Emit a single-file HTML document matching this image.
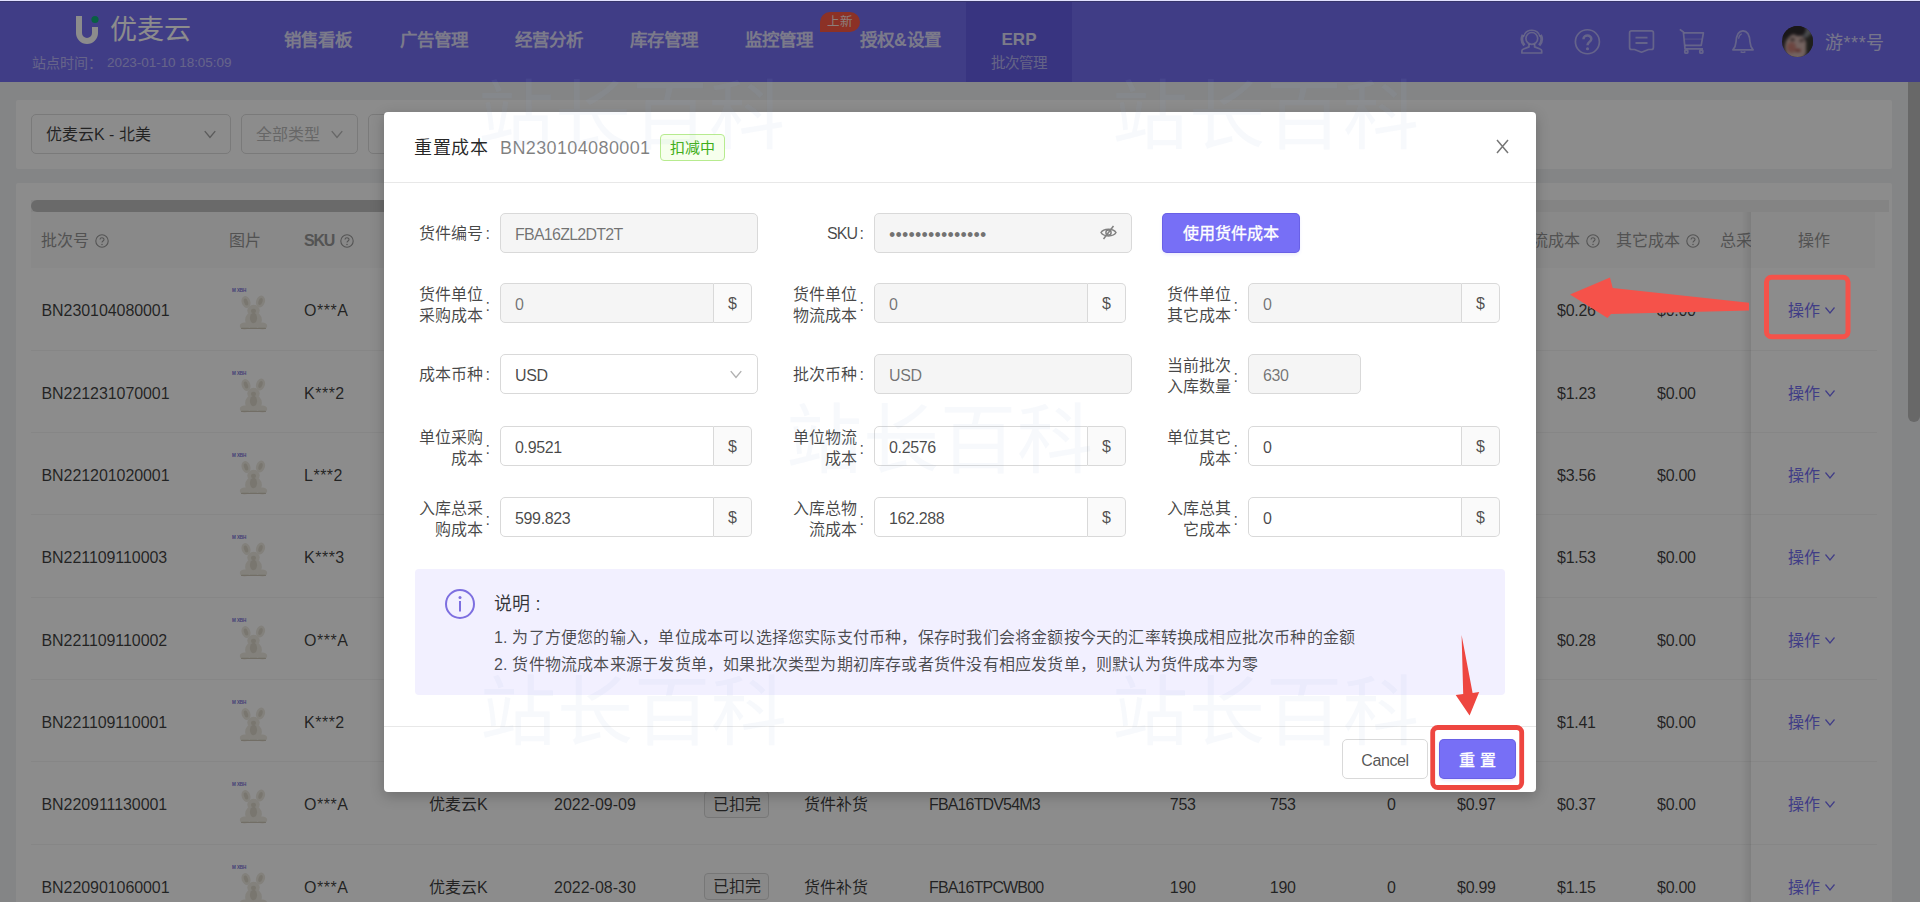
<!DOCTYPE html>
<html lang="zh-CN"><head><meta charset="utf-8"><title>批次管理</title>
<style>
*{box-sizing:border-box;margin:0;padding:0}
html,body{width:1920px;height:902px;overflow:hidden;background:#f0f2f5}
body{font-family:"Liberation Sans",sans-serif;font-size:16px;color:rgba(0,0,0,.76);position:relative}
.abs{position:absolute}
.t{position:absolute;white-space:nowrap;line-height:24px;height:24px}
#page{position:absolute;left:0;top:0;width:1920px;height:902px;overflow:hidden;background:#f0f2f5}
/* header */
#hdr{position:absolute;left:0;top:0;width:1920px;height:82px;background:#766ff5}
#hdr .top1{position:absolute;left:0;top:0;width:1920px;height:1px;background:#fff}
#hdr .top2{position:absolute;left:0;top:1px;width:1920px;height:1px;background:#625cc8}
.nav{position:absolute;top:28px;height:24px;line-height:24px;font-size:17.5px;font-weight:bold;color:rgba(255,255,255,.8);white-space:nowrap}
.erp{position:absolute;left:966px;top:1px;width:106px;height:81px;background:#675fe9}
.hicon{position:absolute;color:rgba(255,255,255,.45)}
/* cards */
.card{position:absolute;background:#fff;border-radius:2px}
.sel{position:absolute;top:14px;height:40px;border:1px solid #dedede;border-radius:5px;background:#fff}
.sel .t{top:8px}
/* table */
.th{position:absolute;top:17px;height:24px;line-height:24px;white-space:nowrap;color:#969696;font-size:16px}
.q{vertical-align:-1.5px;margin-left:6px;color:#9a9a9a}
.row{position:absolute;left:31px;width:1846px;height:82.35px;border-bottom:1px solid #f4f4f4}
.row .t{top:31px}
.thumb{position:absolute;left:201px;top:20px}
.tag{position:absolute;left:673px;top:28.5px;width:65px;height:27px;line-height:26px;border:1px solid #d9d9d9;border-radius:4px;background:#fafafa;text-align:center;font-size:16px;white-space:nowrap}
.r{text-align:right}
.op{color:#766ff5}
/* modal */
#mask{position:absolute;left:0;top:0;width:1920px;height:902px;background:rgba(0,0,0,.45)}
#modal{position:absolute;left:384px;top:112px;width:1152px;height:680px;background:#fff;border-radius:4px;box-shadow:0 4px 14px rgba(0,0,0,.22)}
#modal .hline{position:absolute;left:0;width:1152px;height:1px;background:#e8e8e8}
.lab{position:absolute;text-align:right;color:rgba(0,0,0,.72);font-size:16px;line-height:21px;white-space:nowrap}
.inp{position:absolute;height:40px;border:1px solid #d9d9d9;border-radius:5px;background:#fff;font-size:16px;line-height:42px;padding-left:14px;color:rgba(0,0,0,.72);white-space:nowrap;letter-spacing:-0.35px}
.inp.dis{background:#f5f5f5;color:rgba(0,0,0,.54)}
.inp.grp{border-radius:5px 0 0 5px}
.add{position:absolute;width:38px;height:40px;border:1px solid #d9d9d9;border-left:0;border-radius:0 5px 5px 0;background:#fafafa;text-align:center;line-height:40px;font-size:16px;color:rgba(0,0,0,.7)}
.btn{position:absolute;height:40px;border-radius:5px;background:#776ff6;box-shadow:inset 0 0 0 1px rgba(80,70,200,.35), 0 2px 3px rgba(118,111,245,.12);color:#fff;text-align:center;line-height:41px;font-size:16px;white-space:nowrap}
.wm{position:absolute;font-size:76px;line-height:80px;height:80px;white-space:nowrap;font-weight:normal;letter-spacing:1px;color:rgba(150,180,220,.075);pointer-events:none}
</style></head><body>
<div id="page">

<div id="hdr">
<svg class="abs" style="left:74px;top:14px" width="28" height="32" viewBox="0 0 28 32"><path d="M5 2 V19 a8 8 0 0 0 16 0 V13" fill="none" stroke="#fff" stroke-width="6" stroke-linecap="butt" opacity="1"/><circle cx="21" cy="5.5" r="3.6" fill="#0fb07a"/></svg>
<div class="t" style="left:110px;top:15px;height:30px;line-height:30px;font-size:27px;color:#fff;letter-spacing:0px">优麦云</div>
<div class="t" style="left:32px;top:53px;height:20px;line-height:20px;font-size:14px;color:rgba(255,255,255,.5)">站点时间：</div><div class="t" style="left:107px;top:53px;height:20px;line-height:20px;font-size:13.5px;color:rgba(255,255,255,.5);letter-spacing:-0.05px">2023-01-10 18:05:09</div>
<div class="nav" style="left:284px">销售看板</div>
<div class="nav" style="left:400px">广告管理</div>
<div class="nav" style="left:515px">经营分析</div>
<div class="nav" style="left:630px">库存管理</div>
<div class="nav" style="left:745px">监控管理</div>
<div class="nav" style="left:860px">授权&amp;设置</div>
<div class="abs" style="left:820px;top:12px;width:40px;height:20px;background:#ff5a45;border-radius:10px 10px 10px 0;color:rgba(255,255,255,.85);font-size:12.5px;line-height:20px;text-align:center;white-space:nowrap">上新</div>
<div class="erp"><div class="t" style="left:0;width:106px;text-align:center;top:27px;font-size:17px;font-weight:bold;color:rgba(255,255,255,.82)">ERP</div><div class="t" style="left:0;width:106px;text-align:center;top:50px;font-size:14.5px;color:rgba(255,255,255,.55)">批次管理</div></div>
<svg class="abs" style="left:0;top:0" width="1920" height="82" viewBox="0 0 1920 82" fill="none" stroke="rgba(222,222,255,.64)" stroke-width="1.7" stroke-linejoin="round"><circle cx="1531.8" cy="38.4" r="5.9"/><path d="M1523.6 36.6 A8.5 8.5 0 0 1 1540 36.6" stroke-width="1.5"/><path d="M1523 34.8 A9.6 9.6 0 0 0 1524.4 45.4 M1540.6 34.8 A9.6 9.6 0 0 1 1539.2 45.4" stroke-width="2.8"/><path d="M1529 44 V46.9 L1523.5 49 Q1522 49.5 1521.9 50.8 V53 H1541.7 V50.8 Q1541.6 49.5 1540.1 49 L1534.6 46.9 V44"/><circle cx="1587.4" cy="41.75" r="12"/><path d="M1583.5 39.2 C1583.5 34.3 1591.5 34.5 1591.3 39 C1591.2 42 1587.5 41.8 1587.5 45.2" stroke-width="2.5"/><circle cx="1587.5" cy="48.7" r="1.55" fill="rgba(222,222,255,.64)" stroke="none"/><path d="M1631.6 30.8 H1651.4 a2 2 0 0 1 2 2 V47.5 a2 2 0 0 1 -2 2 H1648.5 L1641.5 52.2 L1634.5 49.5 H1631.6 a2 2 0 0 1 -2 -2 V32.8 a2 2 0 0 1 2 -2 Z"/><path d="M1635.5 37.6 H1647.5 M1635.5 43 H1647.5" stroke-width="1.9"/><path d="M1679.8 29.4 L1683.4 32 L1685 48.8 H1703"/><path d="M1683.8 32.9 H1703.4 L1701.2 45.4 H1685"/><path d="M1684.6 39.1 H1702.2" stroke-width="1" opacity=".6"/><rect x="1684.8" y="50.3" width="3" height="2.8" rx=".6"/><rect x="1699.8" y="50.3" width="3" height="2.8" rx=".6"/><path d="M1743 30.9 C1737 30.9 1736.3 37 1736 42 C1735.7 46.5 1734.6 48 1732.9 49.8 H1753.1 C1751.4 48 1750.3 46.5 1750 42 C1749.7 37 1749 30.9 1743 30.9 Z"/><path d="M1740.6 51.6 Q1743 53.2 1745.4 51.6" stroke-width="1.4"/><path d="M1741.8 33.8 C1739.8 34.6 1738.8 36.6 1738.6 38.8" stroke-width="1.2"/></svg>
<div class="abs" style="left:1782px;top:26px;width:31px;height:31px;border-radius:50%;overflow:hidden;background:#3b3438"><div class="abs" style="left:-4px;top:-4px;width:39px;height:39px;filter:blur(1.6px)"><div class="abs" style="left:20px;top:0px;width:22px;height:16px;border-radius:50%;background:#85878c"></div><div class="abs" style="left:0px;top:-3px;width:28px;height:20px;border-radius:50%;background:#2f2a2e"></div><div class="abs" style="left:7px;top:12px;width:22px;height:27px;border-radius:50%;background:#d2b4ae"></div><div class="abs" style="left:9px;top:20px;width:9px;height:11px;border-radius:50%;background:#c0685e;opacity:.7"></div><div class="abs" style="left:12px;top:16px;width:5px;height:3px;border-radius:50%;background:#5a4644"></div><div class="abs" style="left:21px;top:17px;width:5px;height:3px;border-radius:50%;background:#6a5654"></div><div class="abs" style="left:17px;top:27px;width:6px;height:2.5px;border-radius:50%;background:#a8504a"></div><div class="abs" style="left:28px;top:12px;width:12px;height:28px;border-radius:45%;background:#3a3a34"></div><div class="abs" style="left:15px;top:6px;width:11px;height:8px;border-radius:50%;background:#2f2a2e"></div></div></div>
<div class="t" style="left:1825px;top:31px;font-size:18px;color:rgba(255,255,255,.72);letter-spacing:0.55px">游***号</div>
</div>
<div class="card" style="left:16px;top:100px;width:1876px;height:69px">
<div class="sel" style="left:15px;width:200px"><div class="t" style="left:14px;color:rgba(0,0,0,.75)">优麦云K - 北美</div><svg class="abs" style="left:171px;top:12px;color:#a6a6a6" width="14" height="14" viewBox="0 0 12 12"><path d="M1.5 3.5 L6 9 L10.5 3.5" fill="none" stroke="currentColor" stroke-width="1.2"/></svg></div>
<div class="sel" style="left:225px;width:117px"><div class="t" style="left:14px;color:#bcbcbc">全部类型</div><svg class="abs" style="left:88px;top:12px;color:#bcbcbc" width="14" height="14" viewBox="0 0 12 12"><path d="M1.5 3.5 L6 9 L10.5 3.5" fill="none" stroke="currentColor" stroke-width="1.2"/></svg></div>
<div class="sel" style="left:352px;width:200px"></div>
</div>
<div class="card" style="left:16px;top:183px;width:1876px;height:740px"></div>
<div class="abs" style="left:31px;top:200px;width:1858px;height:12px;background:#f1f1f1"></div>
<div class="abs" style="left:31px;top:200px;width:1380px;height:12px;background:#c1c1c1;border-radius:6px"></div>
<div class="abs" style="left:31px;top:212px;width:1846px;height:56px;background:#fafafa">
<div class="th" style="left:10px">批次号<svg class="q" width="14" height="14" viewBox="0 0 14 14"><circle cx="7" cy="7" r="6.2" fill="none" stroke="currentColor" stroke-width="1.1"/><path d="M5 5.6 C5 3.2 9 3.2 9 5.5 C9 7 7 7 7 8.6" fill="none" stroke="currentColor" stroke-width="1.1"/><circle cx="7" cy="10.5" r="0.75" fill="currentColor"/></svg></div>
<div class="th" style="left:198px">图片</div>
<div class="th" style="left:273px;font-weight:bold;font-size:16px;color:#999;letter-spacing:-1.2px">SKU<svg class="q" width="14" height="14" viewBox="0 0 14 14"><circle cx="7" cy="7" r="6.2" fill="none" stroke="currentColor" stroke-width="1.1"/><path d="M5 5.6 C5 3.2 9 3.2 9 5.5 C9 7 7 7 7 8.6" fill="none" stroke="currentColor" stroke-width="1.1"/><circle cx="7" cy="10.5" r="0.75" fill="currentColor"/></svg></div>
<div class="th r" style="right:277px">物流成本<svg class="q" width="14" height="14" viewBox="0 0 14 14"><circle cx="7" cy="7" r="6.2" fill="none" stroke="currentColor" stroke-width="1.1"/><path d="M5 5.6 C5 3.2 9 3.2 9 5.5 C9 7 7 7 7 8.6" fill="none" stroke="currentColor" stroke-width="1.1"/><circle cx="7" cy="10.5" r="0.75" fill="currentColor"/></svg></div>
<div class="th r" style="right:177px">其它成本<svg class="q" width="14" height="14" viewBox="0 0 14 14"><circle cx="7" cy="7" r="6.2" fill="none" stroke="currentColor" stroke-width="1.1"/><path d="M5 5.6 C5 3.2 9 3.2 9 5.5 C9 7 7 7 7 8.6" fill="none" stroke="currentColor" stroke-width="1.1"/><circle cx="7" cy="10.5" r="0.75" fill="currentColor"/></svg></div>
<div class="th" style="left:1689px">总采购成本</div>
</div>
<div class="row" style="top:268.3px">
<div class="t" style="left:10.5px;letter-spacing:-0.07px">BN230104080001</div>
<svg class="thumb" width="40" height="46" viewBox="0 0 40 46"><text x="0" y="4.2" font-size="4.6" fill="#7b73d8" font-family="Liberation Sans, sans-serif" font-weight="bold" letter-spacing="-0.1">M XBH</text><g fill="#eeebe2"><ellipse cx="14" cy="14" rx="4.4" ry="6" transform="rotate(-18 14 14)"/><ellipse cx="28.5" cy="13.5" rx="4.4" ry="6" transform="rotate(18 28.5 13.5)"/><ellipse cx="21.5" cy="22.5" rx="6.2" ry="5.8"/><ellipse cx="21.5" cy="32" rx="8.4" ry="8.6"/><ellipse cx="12.6" cy="38" rx="4.8" ry="3.4"/><ellipse cx="30.4" cy="38" rx="4.8" ry="3.4"/></g><g fill="#ddd8cb"><ellipse cx="14" cy="14" rx="2" ry="3.6" transform="rotate(-18 14 14)"/><ellipse cx="28.5" cy="13.5" rx="2" ry="3.6" transform="rotate(18 28.5 13.5)"/><ellipse cx="21.5" cy="30" rx="3.6" ry="5.2"/><ellipse cx="21.5" cy="23" rx="2.6" ry="2.2"/><rect x="9" y="39.8" width="25" height="1.3" rx=".6" fill="#cfc9ba"/></g></svg>
<div class="t" style="left:273px;letter-spacing:0.5px">O***A</div>
<div class="t" style="left:398px">优麦云K</div>
<div class="t" style="left:523px">2023-01-04</div>
<div class="tag">扣减中</div>
<div class="t" style="left:773px">货件补货</div>
<div class="t" style="left:898px;letter-spacing:-0.85px">FBA16ZL2DT2T</div>
<div class="t r" style="right:681.4px;letter-spacing:-0.3px">630</div>
<div class="t r" style="right:581.4px;letter-spacing:-0.3px">630</div>
<div class="t r" style="right:481.4px;letter-spacing:-0.3px">0</div>
<div class="t r" style="right:381.4px;letter-spacing:-0.3px">$0.95</div>
<div class="t r" style="right:281.4px;letter-spacing:-0.3px">$0.26</div>
<div class="t r" style="right:181.4px;letter-spacing:-0.3px">$0.00</div>
</div>
<div class="row" style="top:350.6px">
<div class="t" style="left:10.5px;letter-spacing:-0.07px">BN221231070001</div>
<svg class="thumb" width="40" height="46" viewBox="0 0 40 46"><text x="0" y="4.2" font-size="4.6" fill="#7b73d8" font-family="Liberation Sans, sans-serif" font-weight="bold" letter-spacing="-0.1">M XBH</text><g fill="#eeebe2"><ellipse cx="14" cy="14" rx="4.4" ry="6" transform="rotate(-18 14 14)"/><ellipse cx="28.5" cy="13.5" rx="4.4" ry="6" transform="rotate(18 28.5 13.5)"/><ellipse cx="21.5" cy="22.5" rx="6.2" ry="5.8"/><ellipse cx="21.5" cy="32" rx="8.4" ry="8.6"/><ellipse cx="12.6" cy="38" rx="4.8" ry="3.4"/><ellipse cx="30.4" cy="38" rx="4.8" ry="3.4"/></g><g fill="#ddd8cb"><ellipse cx="14" cy="14" rx="2" ry="3.6" transform="rotate(-18 14 14)"/><ellipse cx="28.5" cy="13.5" rx="2" ry="3.6" transform="rotate(18 28.5 13.5)"/><ellipse cx="21.5" cy="30" rx="3.6" ry="5.2"/><ellipse cx="21.5" cy="23" rx="2.6" ry="2.2"/><rect x="9" y="39.8" width="25" height="1.3" rx=".6" fill="#cfc9ba"/></g></svg>
<div class="t" style="left:273px;letter-spacing:0.5px">K***2</div>
<div class="t" style="left:398px">优麦云K</div>
<div class="t" style="left:523px">2022-12-31</div>
<div class="tag">扣减中</div>
<div class="t" style="left:773px">货件补货</div>
<div class="t" style="left:898px;letter-spacing:-0.85px">FBA16YK7QD2L</div>
<div class="t r" style="right:681.4px;letter-spacing:-0.3px">420</div>
<div class="t r" style="right:581.4px;letter-spacing:-0.3px">420</div>
<div class="t r" style="right:481.4px;letter-spacing:-0.3px">0</div>
<div class="t r" style="right:381.4px;letter-spacing:-0.3px">$1.12</div>
<div class="t r" style="right:281.4px;letter-spacing:-0.3px">$1.23</div>
<div class="t r" style="right:181.4px;letter-spacing:-0.3px">$0.00</div>
</div>
<div class="row" style="top:433.0px">
<div class="t" style="left:10.5px;letter-spacing:-0.07px">BN221201020001</div>
<svg class="thumb" width="40" height="46" viewBox="0 0 40 46"><text x="0" y="4.2" font-size="4.6" fill="#7b73d8" font-family="Liberation Sans, sans-serif" font-weight="bold" letter-spacing="-0.1">M XBH</text><g fill="#eeebe2"><ellipse cx="14" cy="14" rx="4.4" ry="6" transform="rotate(-18 14 14)"/><ellipse cx="28.5" cy="13.5" rx="4.4" ry="6" transform="rotate(18 28.5 13.5)"/><ellipse cx="21.5" cy="22.5" rx="6.2" ry="5.8"/><ellipse cx="21.5" cy="32" rx="8.4" ry="8.6"/><ellipse cx="12.6" cy="38" rx="4.8" ry="3.4"/><ellipse cx="30.4" cy="38" rx="4.8" ry="3.4"/></g><g fill="#ddd8cb"><ellipse cx="14" cy="14" rx="2" ry="3.6" transform="rotate(-18 14 14)"/><ellipse cx="28.5" cy="13.5" rx="2" ry="3.6" transform="rotate(18 28.5 13.5)"/><ellipse cx="21.5" cy="30" rx="3.6" ry="5.2"/><ellipse cx="21.5" cy="23" rx="2.6" ry="2.2"/><rect x="9" y="39.8" width="25" height="1.3" rx=".6" fill="#cfc9ba"/></g></svg>
<div class="t" style="left:273px;letter-spacing:0.5px">L***2</div>
<div class="t" style="left:398px">优麦云K</div>
<div class="t" style="left:523px">2022-12-01</div>
<div class="tag">已扣完</div>
<div class="t" style="left:773px">货件补货</div>
<div class="t" style="left:898px;letter-spacing:-0.85px">FBA16XW3PL9M</div>
<div class="t r" style="right:681.4px;letter-spacing:-0.3px">300</div>
<div class="t r" style="right:581.4px;letter-spacing:-0.3px">300</div>
<div class="t r" style="right:481.4px;letter-spacing:-0.3px">0</div>
<div class="t r" style="right:381.4px;letter-spacing:-0.3px">$2.10</div>
<div class="t r" style="right:281.4px;letter-spacing:-0.3px">$3.56</div>
<div class="t r" style="right:181.4px;letter-spacing:-0.3px">$0.00</div>
</div>
<div class="row" style="top:515.4px">
<div class="t" style="left:10.5px;letter-spacing:-0.07px">BN221109110003</div>
<svg class="thumb" width="40" height="46" viewBox="0 0 40 46"><text x="0" y="4.2" font-size="4.6" fill="#7b73d8" font-family="Liberation Sans, sans-serif" font-weight="bold" letter-spacing="-0.1">M XBH</text><g fill="#eeebe2"><ellipse cx="14" cy="14" rx="4.4" ry="6" transform="rotate(-18 14 14)"/><ellipse cx="28.5" cy="13.5" rx="4.4" ry="6" transform="rotate(18 28.5 13.5)"/><ellipse cx="21.5" cy="22.5" rx="6.2" ry="5.8"/><ellipse cx="21.5" cy="32" rx="8.4" ry="8.6"/><ellipse cx="12.6" cy="38" rx="4.8" ry="3.4"/><ellipse cx="30.4" cy="38" rx="4.8" ry="3.4"/></g><g fill="#ddd8cb"><ellipse cx="14" cy="14" rx="2" ry="3.6" transform="rotate(-18 14 14)"/><ellipse cx="28.5" cy="13.5" rx="2" ry="3.6" transform="rotate(18 28.5 13.5)"/><ellipse cx="21.5" cy="30" rx="3.6" ry="5.2"/><ellipse cx="21.5" cy="23" rx="2.6" ry="2.2"/><rect x="9" y="39.8" width="25" height="1.3" rx=".6" fill="#cfc9ba"/></g></svg>
<div class="t" style="left:273px;letter-spacing:0.5px">K***3</div>
<div class="t" style="left:398px">优麦云K</div>
<div class="t" style="left:523px">2022-11-09</div>
<div class="tag">已扣完</div>
<div class="t" style="left:773px">货件补货</div>
<div class="t" style="left:898px;letter-spacing:-0.85px">FBA16WT5RM1C</div>
<div class="t r" style="right:681.4px;letter-spacing:-0.3px">510</div>
<div class="t r" style="right:581.4px;letter-spacing:-0.3px">510</div>
<div class="t r" style="right:481.4px;letter-spacing:-0.3px">0</div>
<div class="t r" style="right:381.4px;letter-spacing:-0.3px">$1.04</div>
<div class="t r" style="right:281.4px;letter-spacing:-0.3px">$1.53</div>
<div class="t r" style="right:181.4px;letter-spacing:-0.3px">$0.00</div>
</div>
<div class="row" style="top:597.7px">
<div class="t" style="left:10.5px;letter-spacing:-0.07px">BN221109110002</div>
<svg class="thumb" width="40" height="46" viewBox="0 0 40 46"><text x="0" y="4.2" font-size="4.6" fill="#7b73d8" font-family="Liberation Sans, sans-serif" font-weight="bold" letter-spacing="-0.1">M XBH</text><g fill="#eeebe2"><ellipse cx="14" cy="14" rx="4.4" ry="6" transform="rotate(-18 14 14)"/><ellipse cx="28.5" cy="13.5" rx="4.4" ry="6" transform="rotate(18 28.5 13.5)"/><ellipse cx="21.5" cy="22.5" rx="6.2" ry="5.8"/><ellipse cx="21.5" cy="32" rx="8.4" ry="8.6"/><ellipse cx="12.6" cy="38" rx="4.8" ry="3.4"/><ellipse cx="30.4" cy="38" rx="4.8" ry="3.4"/></g><g fill="#ddd8cb"><ellipse cx="14" cy="14" rx="2" ry="3.6" transform="rotate(-18 14 14)"/><ellipse cx="28.5" cy="13.5" rx="2" ry="3.6" transform="rotate(18 28.5 13.5)"/><ellipse cx="21.5" cy="30" rx="3.6" ry="5.2"/><ellipse cx="21.5" cy="23" rx="2.6" ry="2.2"/><rect x="9" y="39.8" width="25" height="1.3" rx=".6" fill="#cfc9ba"/></g></svg>
<div class="t" style="left:273px;letter-spacing:0.5px">O***A</div>
<div class="t" style="left:398px">优麦云K</div>
<div class="t" style="left:523px">2022-11-09</div>
<div class="tag">已扣完</div>
<div class="t" style="left:773px">货件补货</div>
<div class="t" style="left:898px;letter-spacing:-0.85px">FBA16WT5RM1C</div>
<div class="t r" style="right:681.4px;letter-spacing:-0.3px">260</div>
<div class="t r" style="right:581.4px;letter-spacing:-0.3px">260</div>
<div class="t r" style="right:481.4px;letter-spacing:-0.3px">0</div>
<div class="t r" style="right:381.4px;letter-spacing:-0.3px">$0.93</div>
<div class="t r" style="right:281.4px;letter-spacing:-0.3px">$0.28</div>
<div class="t r" style="right:181.4px;letter-spacing:-0.3px">$0.00</div>
</div>
<div class="row" style="top:680.0px">
<div class="t" style="left:10.5px;letter-spacing:-0.07px">BN221109110001</div>
<svg class="thumb" width="40" height="46" viewBox="0 0 40 46"><text x="0" y="4.2" font-size="4.6" fill="#7b73d8" font-family="Liberation Sans, sans-serif" font-weight="bold" letter-spacing="-0.1">M XBH</text><g fill="#eeebe2"><ellipse cx="14" cy="14" rx="4.4" ry="6" transform="rotate(-18 14 14)"/><ellipse cx="28.5" cy="13.5" rx="4.4" ry="6" transform="rotate(18 28.5 13.5)"/><ellipse cx="21.5" cy="22.5" rx="6.2" ry="5.8"/><ellipse cx="21.5" cy="32" rx="8.4" ry="8.6"/><ellipse cx="12.6" cy="38" rx="4.8" ry="3.4"/><ellipse cx="30.4" cy="38" rx="4.8" ry="3.4"/></g><g fill="#ddd8cb"><ellipse cx="14" cy="14" rx="2" ry="3.6" transform="rotate(-18 14 14)"/><ellipse cx="28.5" cy="13.5" rx="2" ry="3.6" transform="rotate(18 28.5 13.5)"/><ellipse cx="21.5" cy="30" rx="3.6" ry="5.2"/><ellipse cx="21.5" cy="23" rx="2.6" ry="2.2"/><rect x="9" y="39.8" width="25" height="1.3" rx=".6" fill="#cfc9ba"/></g></svg>
<div class="t" style="left:273px;letter-spacing:0.5px">K***2</div>
<div class="t" style="left:398px">优麦云K</div>
<div class="t" style="left:523px">2022-11-09</div>
<div class="tag">已扣完</div>
<div class="t" style="left:773px">货件补货</div>
<div class="t" style="left:898px;letter-spacing:-0.85px">FBA16WT5RM1C</div>
<div class="t r" style="right:681.4px;letter-spacing:-0.3px">480</div>
<div class="t r" style="right:581.4px;letter-spacing:-0.3px">480</div>
<div class="t r" style="right:481.4px;letter-spacing:-0.3px">0</div>
<div class="t r" style="right:381.4px;letter-spacing:-0.3px">$1.02</div>
<div class="t r" style="right:281.4px;letter-spacing:-0.3px">$1.41</div>
<div class="t r" style="right:181.4px;letter-spacing:-0.3px">$0.00</div>
</div>
<div class="row" style="top:762.4px">
<div class="t" style="left:10.5px;letter-spacing:-0.07px">BN220911130001</div>
<svg class="thumb" width="40" height="46" viewBox="0 0 40 46"><text x="0" y="4.2" font-size="4.6" fill="#7b73d8" font-family="Liberation Sans, sans-serif" font-weight="bold" letter-spacing="-0.1">M XBH</text><g fill="#eeebe2"><ellipse cx="14" cy="14" rx="4.4" ry="6" transform="rotate(-18 14 14)"/><ellipse cx="28.5" cy="13.5" rx="4.4" ry="6" transform="rotate(18 28.5 13.5)"/><ellipse cx="21.5" cy="22.5" rx="6.2" ry="5.8"/><ellipse cx="21.5" cy="32" rx="8.4" ry="8.6"/><ellipse cx="12.6" cy="38" rx="4.8" ry="3.4"/><ellipse cx="30.4" cy="38" rx="4.8" ry="3.4"/></g><g fill="#ddd8cb"><ellipse cx="14" cy="14" rx="2" ry="3.6" transform="rotate(-18 14 14)"/><ellipse cx="28.5" cy="13.5" rx="2" ry="3.6" transform="rotate(18 28.5 13.5)"/><ellipse cx="21.5" cy="30" rx="3.6" ry="5.2"/><ellipse cx="21.5" cy="23" rx="2.6" ry="2.2"/><rect x="9" y="39.8" width="25" height="1.3" rx=".6" fill="#cfc9ba"/></g></svg>
<div class="t" style="left:273px;letter-spacing:0.5px">O***A</div>
<div class="t" style="left:398px">优麦云K</div>
<div class="t" style="left:523px">2022-09-09</div>
<div class="tag">已扣完</div>
<div class="t" style="left:773px">货件补货</div>
<div class="t" style="left:898px;letter-spacing:-0.85px">FBA16TDV54M3</div>
<div class="t r" style="right:681.4px;letter-spacing:-0.3px">753</div>
<div class="t r" style="right:581.4px;letter-spacing:-0.3px">753</div>
<div class="t r" style="right:481.4px;letter-spacing:-0.3px">0</div>
<div class="t r" style="right:381.4px;letter-spacing:-0.3px">$0.97</div>
<div class="t r" style="right:281.4px;letter-spacing:-0.3px">$0.37</div>
<div class="t r" style="right:181.4px;letter-spacing:-0.3px">$0.00</div>
</div>
<div class="row" style="top:844.8px">
<div class="t" style="left:10.5px;letter-spacing:-0.07px">BN220901060001</div>
<svg class="thumb" width="40" height="46" viewBox="0 0 40 46"><text x="0" y="4.2" font-size="4.6" fill="#7b73d8" font-family="Liberation Sans, sans-serif" font-weight="bold" letter-spacing="-0.1">M XBH</text><g fill="#eeebe2"><ellipse cx="14" cy="14" rx="4.4" ry="6" transform="rotate(-18 14 14)"/><ellipse cx="28.5" cy="13.5" rx="4.4" ry="6" transform="rotate(18 28.5 13.5)"/><ellipse cx="21.5" cy="22.5" rx="6.2" ry="5.8"/><ellipse cx="21.5" cy="32" rx="8.4" ry="8.6"/><ellipse cx="12.6" cy="38" rx="4.8" ry="3.4"/><ellipse cx="30.4" cy="38" rx="4.8" ry="3.4"/></g><g fill="#ddd8cb"><ellipse cx="14" cy="14" rx="2" ry="3.6" transform="rotate(-18 14 14)"/><ellipse cx="28.5" cy="13.5" rx="2" ry="3.6" transform="rotate(18 28.5 13.5)"/><ellipse cx="21.5" cy="30" rx="3.6" ry="5.2"/><ellipse cx="21.5" cy="23" rx="2.6" ry="2.2"/><rect x="9" y="39.8" width="25" height="1.3" rx=".6" fill="#cfc9ba"/></g></svg>
<div class="t" style="left:273px;letter-spacing:0.5px">O***A</div>
<div class="t" style="left:398px">优麦云K</div>
<div class="t" style="left:523px">2022-08-30</div>
<div class="tag">已扣完</div>
<div class="t" style="left:773px">货件补货</div>
<div class="t" style="left:898px;letter-spacing:-0.85px">FBA16TPCWB00</div>
<div class="t r" style="right:681.4px;letter-spacing:-0.3px">190</div>
<div class="t r" style="right:581.4px;letter-spacing:-0.3px">190</div>
<div class="t r" style="right:481.4px;letter-spacing:-0.3px">0</div>
<div class="t r" style="right:381.4px;letter-spacing:-0.3px">$0.99</div>
<div class="t r" style="right:281.4px;letter-spacing:-0.3px">$1.15</div>
<div class="t r" style="right:181.4px;letter-spacing:-0.3px">$0.00</div>
</div>
<div class="abs" style="left:1741px;top:212px;width:10px;height:700px;background:linear-gradient(to right,rgba(0,0,0,0),rgba(0,0,0,.09))"></div>
<div class="abs" style="left:1751px;top:212px;width:126px;height:700px;background:#fff"></div>
<div class="abs" style="left:1751px;top:212px;width:124px;height:56px;background:#fafafa"><div class="th" style="left:0;width:126px;text-align:center">操作</div></div>
<div class="abs" style="left:1876px;top:233px;width:1px;height:15px;background:#fff;opacity:.55"></div>
<div class="abs" style="left:1751px;top:268.3px;width:126px;height:82.35px;border-bottom:1px solid #f4f4f4"><div class="t op" style="left:37px;top:31px">操作<svg class="" style="margin-left:4px;vertical-align:0px" width="12" height="12" viewBox="0 0 12 12"><path d="M1.5 3.5 L6 9 L10.5 3.5" fill="none" stroke="currentColor" stroke-width="1.2"/></svg></div></div>
<div class="abs" style="left:1751px;top:350.6px;width:126px;height:82.35px;border-bottom:1px solid #f4f4f4"><div class="t op" style="left:37px;top:31px">操作<svg class="" style="margin-left:4px;vertical-align:0px" width="12" height="12" viewBox="0 0 12 12"><path d="M1.5 3.5 L6 9 L10.5 3.5" fill="none" stroke="currentColor" stroke-width="1.2"/></svg></div></div>
<div class="abs" style="left:1751px;top:433.0px;width:126px;height:82.35px;border-bottom:1px solid #f4f4f4"><div class="t op" style="left:37px;top:31px">操作<svg class="" style="margin-left:4px;vertical-align:0px" width="12" height="12" viewBox="0 0 12 12"><path d="M1.5 3.5 L6 9 L10.5 3.5" fill="none" stroke="currentColor" stroke-width="1.2"/></svg></div></div>
<div class="abs" style="left:1751px;top:515.4px;width:126px;height:82.35px;border-bottom:1px solid #f4f4f4"><div class="t op" style="left:37px;top:31px">操作<svg class="" style="margin-left:4px;vertical-align:0px" width="12" height="12" viewBox="0 0 12 12"><path d="M1.5 3.5 L6 9 L10.5 3.5" fill="none" stroke="currentColor" stroke-width="1.2"/></svg></div></div>
<div class="abs" style="left:1751px;top:597.7px;width:126px;height:82.35px;border-bottom:1px solid #f4f4f4"><div class="t op" style="left:37px;top:31px">操作<svg class="" style="margin-left:4px;vertical-align:0px" width="12" height="12" viewBox="0 0 12 12"><path d="M1.5 3.5 L6 9 L10.5 3.5" fill="none" stroke="currentColor" stroke-width="1.2"/></svg></div></div>
<div class="abs" style="left:1751px;top:680.0px;width:126px;height:82.35px;border-bottom:1px solid #f4f4f4"><div class="t op" style="left:37px;top:31px">操作<svg class="" style="margin-left:4px;vertical-align:0px" width="12" height="12" viewBox="0 0 12 12"><path d="M1.5 3.5 L6 9 L10.5 3.5" fill="none" stroke="currentColor" stroke-width="1.2"/></svg></div></div>
<div class="abs" style="left:1751px;top:762.4px;width:126px;height:82.35px;border-bottom:1px solid #f4f4f4"><div class="t op" style="left:37px;top:31px">操作<svg class="" style="margin-left:4px;vertical-align:0px" width="12" height="12" viewBox="0 0 12 12"><path d="M1.5 3.5 L6 9 L10.5 3.5" fill="none" stroke="currentColor" stroke-width="1.2"/></svg></div></div>
<div class="abs" style="left:1751px;top:844.8px;width:126px;height:82.35px;border-bottom:1px solid #f4f4f4"><div class="t op" style="left:37px;top:31px">操作<svg class="" style="margin-left:4px;vertical-align:0px" width="12" height="12" viewBox="0 0 12 12"><path d="M1.5 3.5 L6 9 L10.5 3.5" fill="none" stroke="currentColor" stroke-width="1.2"/></svg></div></div>
<div class="abs" style="left:1908px;top:82px;width:12px;height:340px;background:#bdbdbd;border-radius:0 0 6px 6px"></div>
<div id="mask"></div>
<div class="abs" style="left:0;top:0;width:1920px;height:1px;background:#e1e1ff"></div><div class="abs" style="left:0;top:1px;width:1920px;height:1px;background:#37356a"></div>
<div id="modal">
<div class="t" style="left:30px;top:24px;font-size:18px;color:rgba(0,0,0,.85);letter-spacing:0.6px">重置成本</div>
<div class="t" style="left:116px;top:24px;font-size:18px;color:rgba(0,0,0,.5);letter-spacing:0.38px">BN230104080001</div>
<div class="abs" style="left:276px;top:22px;width:65px;height:27px;border:1px solid #b7eb8f;background:#f6ffed;border-radius:4px;color:#3fae1a;font-size:15px;line-height:25px;text-align:center;white-space:nowrap">扣减中</div>
<svg class="abs" style="left:1112px;top:27px" width="13" height="15" viewBox="0 0 13 15"><path d="M1 1 L12 14 M12 1 L1 14" stroke="#777" stroke-width="1.5" fill="none"/></svg>
<div class="hline" style="top:70px"></div>
<div class="lab" style="right:1046px;top:110.5px;padding-right:7px">货件编号<span style="position:absolute;right:0;top:0.0px">:</span></div>
<div class="inp dis" style="left:116px;top:101px;width:258px"><span style="letter-spacing:-0.75px">FBA16ZL2DT2T</span></div>
<div class="lab" style="right:672px;top:110.5px;padding-right:7px"><span style="letter-spacing:-1px">SKU</span><span style="position:absolute;right:0;top:0.0px">:</span></div>
<div class="inp dis" style="left:490px;top:101px;width:258px"><span style="letter-spacing:0.2px;font-size:18px;position:relative;top:0px">•••••••••••••••</span></div>
<svg class="abs" style="left:716px;top:113px" width="17" height="15" viewBox="0 0 17 15" fill="none" stroke="#808080" stroke-width="1.5"><path d="M1 7.5 C3.5 3 13.5 3 16 7.5 C13.5 12 3.5 12 1 7.5 Z"/><circle cx="8.5" cy="7.5" r="2.6"/><path d="M13.5 1 L3.5 14"/></svg>
<div class="btn" style="left:778px;top:101px;width:138px;font-weight:normal;font-size:16px;-webkit-text-stroke:0.35px #fff">使用货件成本</div>
<div class="lab" style="right:1046px;top:172.0px;padding-right:7px">货件单位<br>采购成本<span style="position:absolute;right:0;top:10.5px">:</span></div>
<div class="inp dis grp" style="left:116px;top:171px;width:214px">0</div>
<div class="add" style="left:330px;top:171px">$</div>
<div class="lab" style="right:672px;top:172.0px;padding-right:7px">货件单位<br>物流成本<span style="position:absolute;right:0;top:10.5px">:</span></div>
<div class="inp dis grp" style="left:490px;top:171px;width:214px">0</div>
<div class="add" style="left:704px;top:171px">$</div>
<div class="lab" style="right:298px;top:172.0px;padding-right:7px">货件单位<br>其它成本<span style="position:absolute;right:0;top:10.5px">:</span></div>
<div class="inp dis grp" style="left:864px;top:171px;width:214px">0</div>
<div class="add" style="left:1078px;top:171px">$</div>
<div class="lab" style="right:1046px;top:251.5px;padding-right:7px">成本币种<span style="position:absolute;right:0;top:0.0px">:</span></div>
<div class="inp" style="left:116px;top:242px;width:258px">USD</div>
<svg style="position:absolute;left:345px;top:255px;color:#b0b0b0" width="14" height="14" viewBox="0 0 12 12"><path d="M1.5 3.5 L6 9 L10.5 3.5" fill="none" stroke="currentColor" stroke-width="1.2"/></svg>
<div class="lab" style="right:672px;top:251.5px;padding-right:7px">批次币种<span style="position:absolute;right:0;top:0.0px">:</span></div>
<div class="inp dis" style="left:490px;top:242px;width:258px">USD</div>
<div class="lab" style="right:298px;top:243.0px;padding-right:7px">当前批次<br>入库数量<span style="position:absolute;right:0;top:10.5px">:</span></div>
<div class="inp dis" style="left:864px;top:242px;width:113px">630</div>
<div class="lab" style="right:1046px;top:315.0px;padding-right:7px">单位采购<br>成本<span style="position:absolute;right:0;top:10.5px">:</span></div>
<div class="inp grp" style="left:116px;top:314px;width:214px">0.9521</div>
<div class="add" style="left:330px;top:314px">$</div>
<div class="lab" style="right:672px;top:315.0px;padding-right:7px">单位物流<br>成本<span style="position:absolute;right:0;top:10.5px">:</span></div>
<div class="inp grp" style="left:490px;top:314px;width:214px">0.2576</div>
<div class="add" style="left:704px;top:314px">$</div>
<div class="lab" style="right:298px;top:315.0px;padding-right:7px">单位其它<br>成本<span style="position:absolute;right:0;top:10.5px">:</span></div>
<div class="inp grp" style="left:864px;top:314px;width:214px">0</div>
<div class="add" style="left:1078px;top:314px">$</div>
<div class="lab" style="right:1046px;top:386.0px;padding-right:7px">入库总采<br>购成本<span style="position:absolute;right:0;top:10.5px">:</span></div>
<div class="inp grp" style="left:116px;top:385px;width:214px">599.823</div>
<div class="add" style="left:330px;top:385px">$</div>
<div class="lab" style="right:672px;top:386.0px;padding-right:7px">入库总物<br>流成本<span style="position:absolute;right:0;top:10.5px">:</span></div>
<div class="inp grp" style="left:490px;top:385px;width:214px">162.288</div>
<div class="add" style="left:704px;top:385px">$</div>
<div class="lab" style="right:298px;top:386.0px;padding-right:7px">入库总其<br>它成本<span style="position:absolute;right:0;top:10.5px">:</span></div>
<div class="inp grp" style="left:864px;top:385px;width:214px">0</div>
<div class="add" style="left:1078px;top:385px">$</div>
<div class="abs" style="left:31px;top:457px;width:1090px;height:126px;background:#f2f0ff;border-radius:4px"></div>
<svg class="abs" style="left:60px;top:476px" width="32" height="32" viewBox="0 0 32 32"><circle cx="16" cy="16" r="14" fill="none" stroke="#7d6fe0" stroke-width="2"/><circle cx="16" cy="9.6" r="1.5" fill="#7d6fe0"/><rect x="15" y="13" width="2" height="10.5" fill="#7d6fe0"/></svg>
<div class="t" style="left:110px;top:480px;font-size:18px;color:rgba(0,0,0,.78);letter-spacing:0.3px">说明<span style="margin-left:5px">:</span></div>
<div class="t" style="left:110px;top:514px;font-size:16px;color:rgba(0,0,0,.7);letter-spacing:0.21px">1. 为了方便您的输入，单位成本可以选择您实际支付币种，保存时我们会将金额按今天的汇率转换成相应批次币种的金额</div>
<div class="t" style="left:110px;top:541px;font-size:16px;color:rgba(0,0,0,.7);letter-spacing:0.21px">2. 货件物流成本来源于发货单，如果批次类型为期初库存或者货件没有相应发货单，则默认为货件成本为零</div>
<div class="hline" style="top:614px"></div>
<div class="abs" style="left:958px;top:627px;width:86px;height:40px;border:1px solid #d9d9d9;border-radius:5px;background:#fff;text-align:center;line-height:41px;font-size:16px;color:rgba(0,0,0,.68);letter-spacing:-0.4px">Cancel</div>
<div class="btn" style="left:1055px;top:627px;width:77px;font-weight:normal;font-size:16px;letter-spacing:0;line-height:43px;-webkit-text-stroke:0.35px #fff">重 置</div>
</div>
<svg class="abs" style="left:0;top:0;pointer-events:none" width="1920" height="902" viewBox="0 0 1920 902">
<rect x="1766.5" y="277.3" width="81.5" height="59.4" rx="5" ry="5" fill="none" stroke="#f5524a" stroke-width="5"/>
<polygon points="1570,294.5 1610,277.5 1612.7,288 1749,302.8 1749,310.5 1611,314 1607.5,318" fill="#f5524a"/>
<rect x="1432.7" y="727.5" width="89" height="60" rx="5" ry="5" fill="none" stroke="#ee4640" stroke-width="4.8"/>
<polygon points="1461.6,635 1472.6,693 1479.2,692 1469.6,715.5 1455.7,695 1463.2,694" fill="#ee4640"/>
</svg>
<div class="wm" style="left:478px;top:77px">站长百科</div>
<div class="wm" style="left:1112px;top:77px">站长百科</div>
<div class="wm" style="left:786px;top:401px">站长百科</div>
<div class="wm" style="left:480px;top:673px">站长百科</div>
<div class="wm" style="left:1112px;top:673px">站长百科</div>
</div></body></html>
